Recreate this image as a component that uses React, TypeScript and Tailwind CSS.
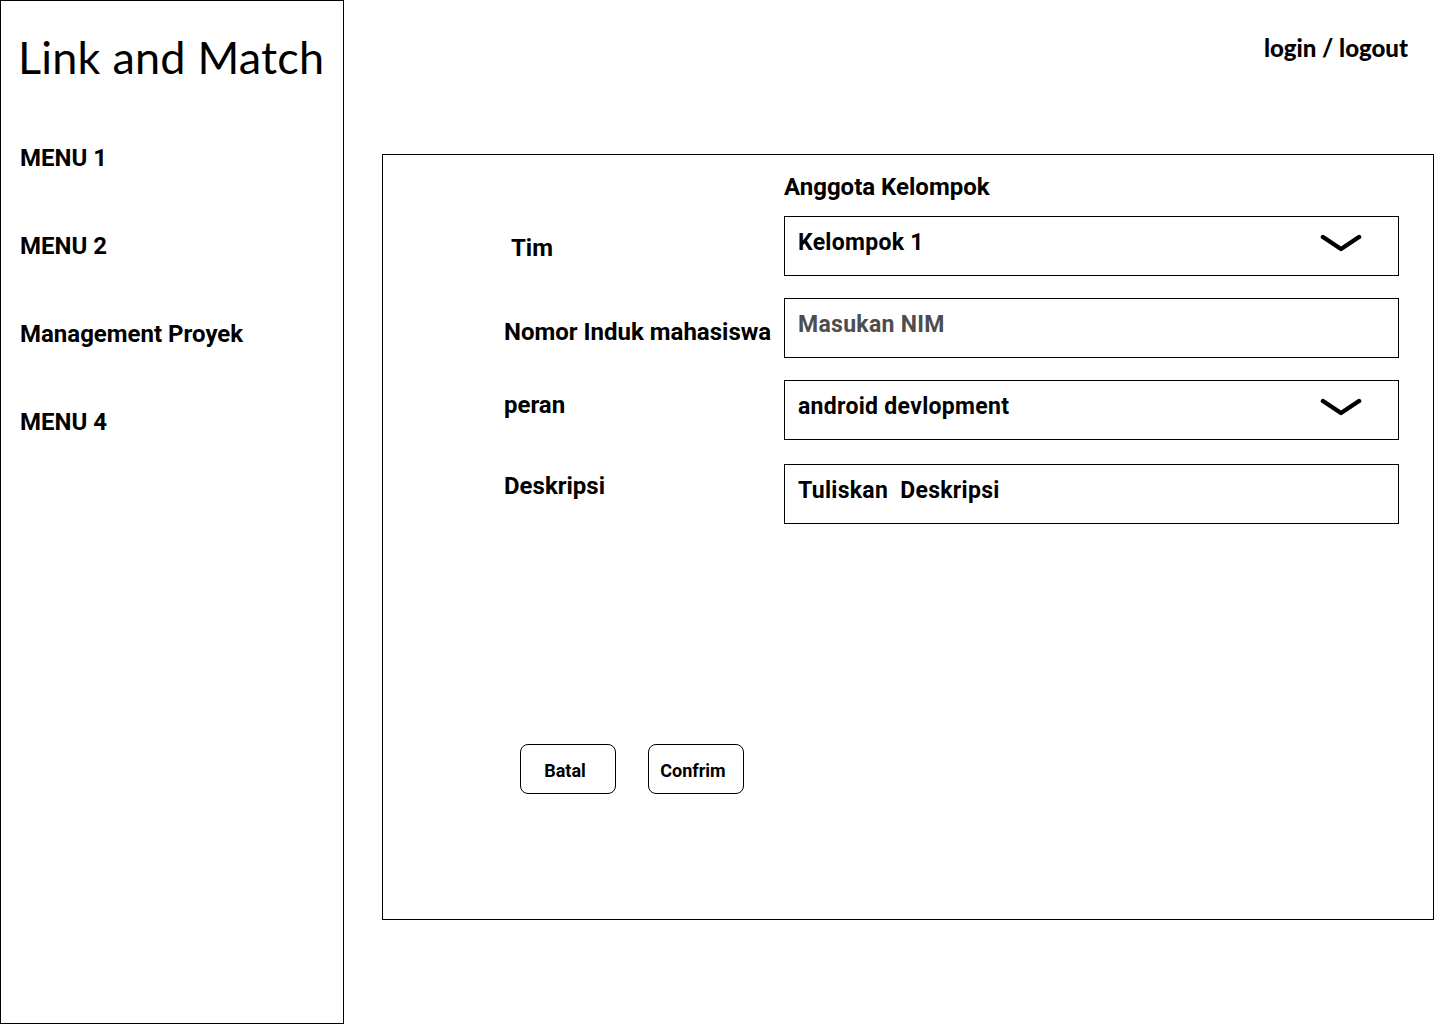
const menus = ["MENU 1", "MENU 2", "Management Proyek", "MENU 4"];

const rows = [
  { label: "Tim", labelClass: "pt-[19px] pl-[7px]", value: "Kelompok 1", select: true, muted: false },
  { label: "Nomor Induk mahasiswa", labelClass: "pt-[21px]", value: "Masukan NIM", select: false, muted: true },
  { label: "peran", labelClass: "pt-[12px]", value: "android devlopment", select: true, muted: false },
  { label: "Deskripsi", labelClass: "pt-[9px]", value: "Tuliskan\u00a0 Deskripsi", select: false, muted: false },
];

function Chevron() {
  return (
    <svg width="42" height="22" viewBox="0 0 42 22" fill="none" className="mt-[4px]">
      <path d="M3 4 L21 16 L39 4" stroke="black" strokeWidth="4.5" strokeLinecap="round" strokeLinejoin="round" />
    </svg>
  );
}

export default function App() {
  return (
    <div className="w-[1440px] h-[1024px] bg-white text-black flex font-['Roboto',sans-serif] overflow-hidden">
      {/* Sidebar */}
      <aside className="w-[344px] h-[1024px] shrink-0 border border-black pl-[17px]">
        <h1 className="mt-[28px] text-[45px] leading-[56px] font-normal font-['Lato',sans-serif] tracking-[0.2px] whitespace-nowrap">
          Link and Match
        </h1>
        <nav className="mt-[59px] pl-[2px] flex flex-col gap-[60px]">
          {menus.map((m) => (
            <div key={m} className="text-[24px] leading-[28px] font-bold">{m}</div>
          ))}
        </nav>
      </aside>

      {/* Main */}
      <main className="flex-1 flex flex-col pl-[38px] pr-[6px]">
        <div className="h-[154px] flex justify-end pr-[26px] pt-[33px]">
          <span className="text-[24px] leading-[30px] font-black font-['Lato',sans-serif] h-fit">login / logout</span>
        </div>

        <section className="w-[1052px] h-[766px] border border-black pl-[121px] flex flex-col">
          <div className="pl-[280px] pt-[18px] text-[24px] leading-[28px] font-bold">Anggota Kelompok</div>

          <div className="mt-[15px] flex flex-col gap-[22px]">
            {rows.map((r, i) => (
              <div key={r.label} className={`flex ${i === 3 ? "mt-[2px]" : ""}`}>
                <div className={`w-[280px] text-[24px] leading-[26px] font-bold whitespace-nowrap ${r.labelClass}`}>{r.label}</div>
                <div className="w-[615px] h-[60px] border border-black flex items-start justify-between pl-[13px] pr-[36px] pt-[12px]">
                  <span className={`text-[23px] leading-[28px] font-bold tracking-[0.3px] ${r.muted ? "text-[#4d4d4d]" : "text-black"}`}>
                    {r.value}
                  </span>
                  {r.select && <Chevron />}
                </div>
              </div>
            ))}
          </div>

          <div className="mt-[220px] ml-[16px] flex gap-[32px]">
            <button className="w-[96px] h-[50px] border border-black rounded-[8px] text-[18px] font-bold pr-[6px] pt-[2px]">Batal</button>
            <button className="w-[96px] h-[50px] border border-black rounded-[8px] text-[18px] font-bold pr-[6px] pt-[2px]">Confrim</button>
          </div>
        </section>
      </main>
    </div>
  );
}
